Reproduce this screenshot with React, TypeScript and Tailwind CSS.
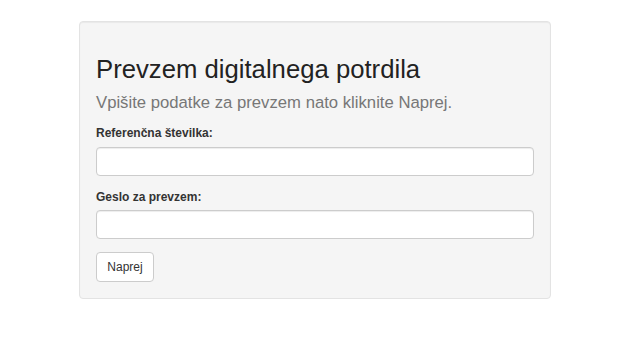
import React from 'react';

const App: React.FC = () => {
  return (
    <div className="min-h-[344px] w-[640px] bg-white pt-[21px] pl-[79px] font-['Liberation_Sans',Arial,sans-serif] text-[#333]">
      <div className="w-[472px] rounded-[4px] border border-[#e3e3e3] bg-[#f5f5f5] px-[16px] pt-[33px] pb-[16px] shadow-[inset_0_1px_1px_rgba(0,0,0,0.05)]">
        <h2 className="text-[25.7px] leading-[28.6px] text-[#222]">Prevzem digitalnega potrdila</h2>
        <p className="mt-[9px] text-[16.7px] leading-[20px] text-[#777]">Vpišite podatke za prevzem nato kliknite Naprej.</p>
        <form className="mt-[12px]" onSubmit={(e) => e.preventDefault()}>
          <label className="mb-[5px] block text-[12px] font-bold leading-[17px]">Referenčna številka:</label>
          <input
            type="text"
            className="block h-[29px] w-full rounded-[4px] border border-[#ccc] bg-white px-3 text-[12px] shadow-[inset_0_1px_1px_rgba(0,0,0,0.075)] outline-none"
          />
          <label className="mt-[13px] mb-[4px] block text-[12px] font-bold leading-[17px]">Geslo za prevzem:</label>
          <input
            type="text"
            className="block h-[29px] w-full rounded-[4px] border border-[#ccc] bg-white px-3 text-[12px] shadow-[inset_0_1px_1px_rgba(0,0,0,0.075)] outline-none"
          />
          <button
            type="submit"
            className="mt-[13px] block h-[30px] w-[58px] rounded-[4px] border border-[#ccc] bg-white text-[12px] text-[#333]"
          >
            Naprej
          </button>
        </form>
      </div>
    </div>
  );
};

export default App;
